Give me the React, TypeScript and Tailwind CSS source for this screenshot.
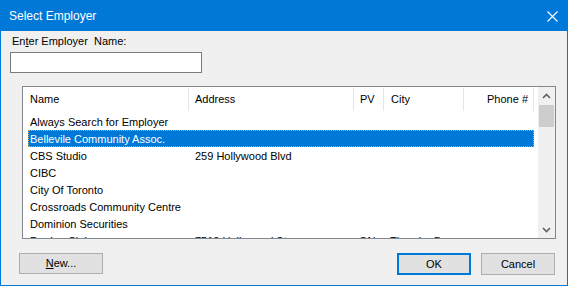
import React from 'react';

type Row = { name: string; address?: string; pv?: string; city?: string; phone?: string };

const rows: Row[] = [
  { name: 'Always Search for Employer' },
  { name: 'Bellevile Community Assoc.' },
  { name: 'CBS Studio', address: '259 Hollywood Blvd' },
  { name: 'CIBC' },
  { name: 'City Of Toronto' },
  { name: 'Crossroads Community Centre' },
  { name: 'Dominion Securities' },
  { name: 'Dunlop Club', address: '7510 Hollywood St', pv: 'ON', city: 'Thunder Bay' },
];

const SELECTED = 1;

function Chevron({ down }: { down?: boolean }) {
  return (
    <svg width="9" height="6" viewBox="0 0 9 6" className={down ? 'rotate-180' : ''}>
      <path d="M1 5 L4.5 1.5 L8 5" fill="none" stroke="#606060" strokeWidth="1.6" />
    </svg>
  );
}

export default function App() {
  return (
    <div
      className="w-[568px] h-[286px] flex flex-col border border-[#0078d7] bg-[#f0f0f0] text-[11px] text-black overflow-hidden"
      style={{ fontFamily: '"Liberation Sans", Arial, sans-serif' }}
    >
      {/* Title bar */}
      <div className="h-[30px] shrink-0 bg-[#0078d7] flex items-center justify-between pl-[8px] pr-[9px]">
        <span className="text-[12px] text-white">Select Employer</span>
        <svg width="11" height="11" viewBox="0 0 11 11">
          <path d="M0.5 0.5 L10.5 10.5 M10.5 0.5 L0.5 10.5" stroke="#fff" strokeWidth="1.1" />
        </svg>
      </div>

      {/* Body */}
      <div className="flex-1 flex flex-col">
        <div className="mt-[4px] ml-[11px] leading-[13px]">
          En<span className="underline">t</span>er Employer&nbsp; Name:
        </div>
        <div className="mt-[4px] ml-[9px] w-[192px] h-[21px] bg-white border border-[#7a7a7a]" />

        {/* List */}
        <div className="mt-[13px] ml-[21px] w-[534px] h-[153px] bg-white border border-[#828790] flex overflow-hidden">
          <div className="flex-1 flex flex-col overflow-hidden">
            <div className="h-[25px] shrink-0 flex items-stretch pt-[1px] pb-[1px]">
              <div className="w-[166px] border-r border-[#e5e5e5] pl-[7px] flex items-center">Name</div>
              <div className="w-[165px] border-r border-[#e5e5e5] pl-[6px] flex items-center">Address</div>
              <div className="w-[30px] border-r border-[#e5e5e5] pl-[6px] flex items-center">PV</div>
              <div className="w-[80px] border-r border-[#e5e5e5] pl-[7px] flex items-center">City</div>
              <div className="w-[70px] border-r border-[#e5e5e5] pr-[5px] flex items-center justify-end">Phone #</div>
            </div>
            <div className="pl-[5px] pt-[1px] flex flex-col">
              {rows.map((r, i) => (
                <div
                  key={r.name}
                  className={`h-[17px] w-[506px] shrink-0 flex items-center pt-[2px] ${
                    i === SELECTED ? 'bg-[#0078d7] text-white outline outline-1 outline-dotted outline-[#e8a040] -outline-offset-1' : ''
                  }`}
                >
                  <div className="w-[165px] pl-[2px] whitespace-nowrap">{r.name}</div>
                  <div className="w-[166px] pl-[2px] whitespace-nowrap">{r.address}</div>
                  <div className="w-[31px] whitespace-nowrap">{r.pv}</div>
                  <div className="w-[75px] whitespace-nowrap">{r.city}</div>
                  <div className="flex-1 text-right pr-[5px] whitespace-nowrap">{r.phone}</div>
                </div>
              ))}
            </div>
          </div>
          {/* Scrollbar */}
          <div className="w-[17px] shrink-0 bg-[#f0f0f0] flex flex-col">
            <div className="h-[17px] flex items-center justify-center">
              <Chevron />
            </div>
            <div className="mt-[1px] mx-[1px] h-[22px] bg-[#cdcdcd]" />
            <div className="flex-1" />
            <div className="h-[17px] flex items-center justify-center">
              <Chevron down />
            </div>
          </div>
        </div>

        {/* Buttons */}
        <div className="mt-[14px] flex items-start">
          <button className="ml-[18px] w-[84px] h-[21px] bg-[#e1e1e1] border border-[#adadad] flex items-center justify-center">
            <span>
              <span className="underline">N</span>ew...
            </span>
          </button>
          <div className="flex-1" />
          <button className="w-[74px] h-[22px] bg-[#e1e1e1] border-2 border-[#0078d7] flex items-center justify-center">
            OK
          </button>
          <button className="ml-[10px] mr-[12px] w-[74px] h-[22px] bg-[#e1e1e1] border border-[#adadad] flex items-center justify-center">
            Cancel
          </button>
        </div>
      </div>
    </div>
  );
}
